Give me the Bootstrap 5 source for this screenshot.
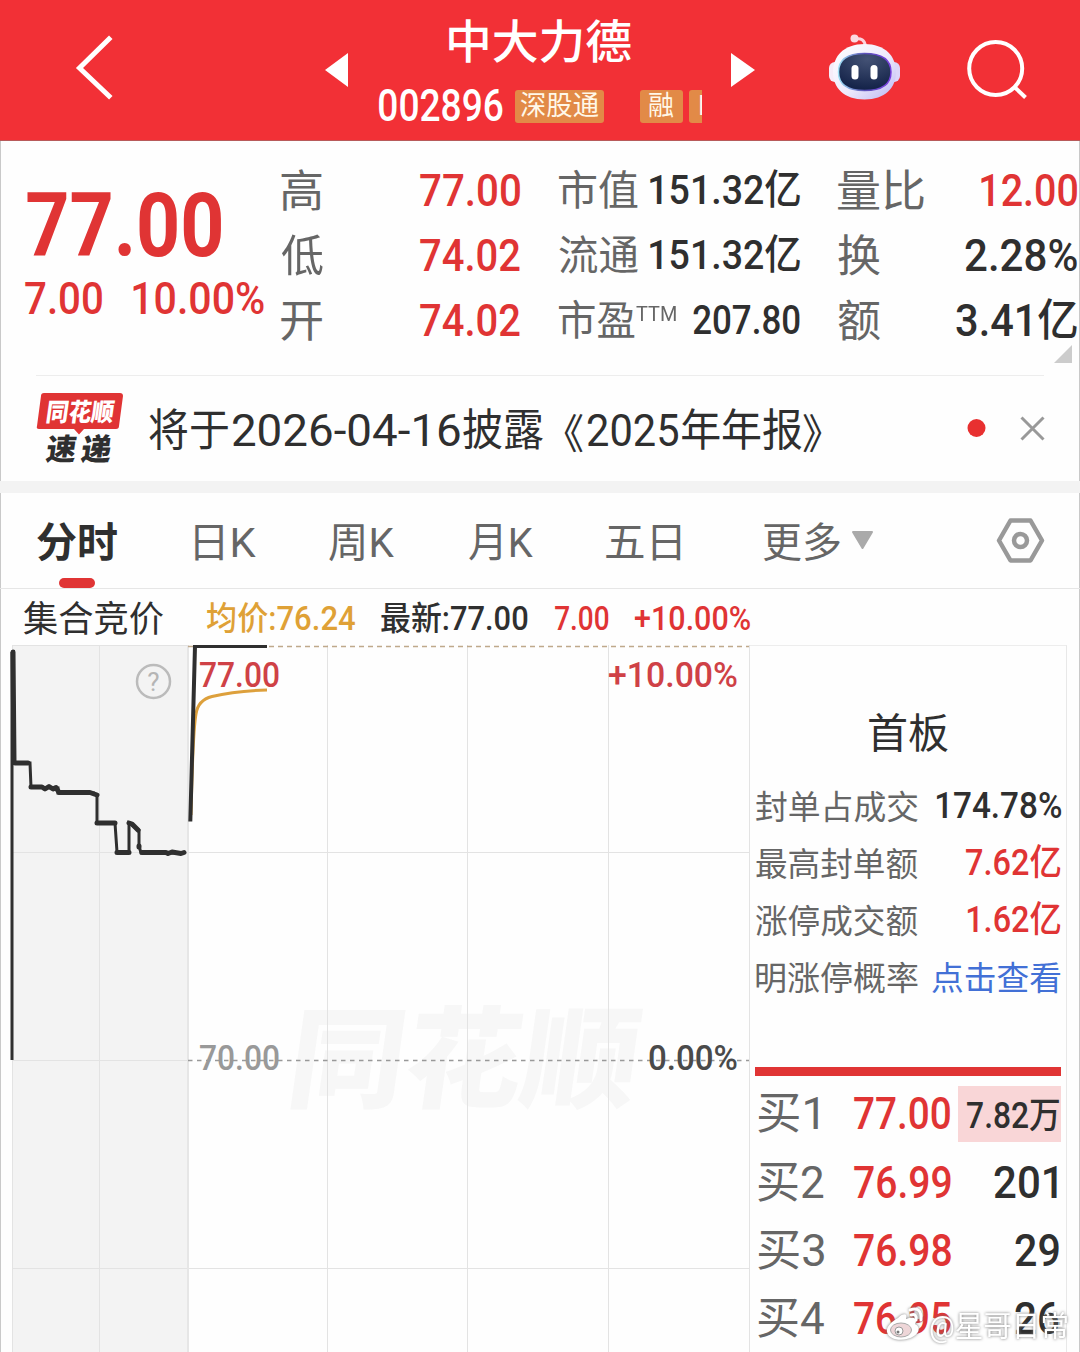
<!DOCTYPE html>
<html lang="zh-CN">
<head>
<meta charset="utf-8">
<meta name="viewport" content="width=device-width, initial-scale=1">
<title>中大力德 002896</title>
<link href="https://cdn.jsdelivr.net/npm/bootstrap@5.3.0/dist/css/bootstrap.min.css" rel="stylesheet">
<style>
  :root { --up:#e03434; --ink:#2f2f2f; --dim:#666; }
  body { font-family:Roboto,"Noto Sans CJK SC",sans-serif; color:var(--ink); background:#fefefe; width:1080px; height:1352px; overflow:hidden; }
  svg { display:block; flex:none; }
  .screen { height:1352px; box-shadow:inset 1px 0 #c9c9c9, inset -1px 0 #c9c9c9; overflow:hidden; }
  .fit { display:block; flex:none; white-space:nowrap; line-height:1; font-weight:inherit; }
  .fit > span { display:inline-block; transform-origin:0 50%; }
  .quo { flex:none; width:41px; font-size:41px; line-height:44px; font-family:"Noto Sans CJK SC",sans-serif; }
  .up { color:var(--up); } .dim { color:var(--dim); } .avg { color:#dfa136; } .go { color:#4270d6; }
  .med { font-weight:500; }
  .s26 { font-size:27px; } .s32 { font-size:33px; } .s35 { font-size:36px; } .s40 { font-size:41px; } .s43 { font-size:44px; } .s46 { font-size:46px; } .s88 { font-size:89px; }

  .topbar { height:140px; background:#f23036; color:#fff; border-bottom:1px solid #b85a5a; box-sizing:content-box; }
  .ident { width:324px; margin-left:31px; margin-right:-1px; padding-top:18px; }
  .ident .title-line { height:48px; margin-left:70px; }
  .ident .code-line { height:34px; margin-top:23px; }
  .tag { height:33px; background:#e28a47; border-radius:3px; color:#fff8e8; overflow:hidden; flex:none; }
  .tag-a { width:89px; margin-left:12px; } .tag-b { width:43px; margin-left:36px; } .tag-c { width:13px; margin-left:6px; padding-left:9px; border-radius:3px 0 0 3px; }

  .quote { height:234px; padding-top:17px; }
  .last { width:255px; margin-left:25px; }
  .last .big { height:99px; padding:35px 0 0 2px; } .last .chg { height:84px; gap:31px; }
  .qcol > div { height:65px; }
  .qcol > div > .dim:first-child { margin-top:2px; }
  .q1 { width:239px; margin-left:1px; } .q2 { width:241px; margin-left:39px; } .q3 { width:239px; margin-left:38px; }
  .rule { height:1px; margin:0 36px; background:#ededed; }
  .corner { margin:-30px 8px 12px auto; }

  .news { height:105px; }
  .band { height:12px; background:#f3f3f3; }
  .tabs { height:96px; border-bottom:1px solid #e6e6e6; padding-left:37px; color:var(--dim); }
  .tabs .fit { margin-top:5px; }
  .tabs .on { color:var(--ink); font-weight:700; position:relative; }
  .tabs .on::after { content:""; position:absolute; left:22px; bottom:-24px; width:36px; height:10px; border-radius:5px; background:var(--up); }
  .legendbar { height:56px; padding:3px 0 0 24px; }
  .side { width:317px; padding:63px 5px 0 6px; margin-right:12px; border-top:1px solid #ededed; border-right:1px solid #e8e8e8; }
  .side .info { height:57px; }
  .side .info .med { margin-top:-3px; }
  .side .head { height:50px; margin-bottom:20px; }
  .bar-red { height:9px; background:var(--up); margin:60px 0 4px -1px; }
  .bid { height:68.4px; padding-left:2px; }
  .bid .hot { width:103px; height:56px; margin-right:0; background:#f9d6d7; padding:3px 2px 0 0; }
  .sig { position:absolute; left:880px; top:1300px; }
</style>
<script src="https://cdn.jsdelivr.net/npm/bootstrap@5.3.0/dist/js/bootstrap.bundle.min.js"></script>
</head>
<body>
<div class="screen position-relative">
  <header class="topbar d-flex">
    <svg width="42" height="140" viewBox="0 0 42 140" style="margin-left:72px"><path d="M37 39 7.500 68 37 96" fill="none" stroke="#fff" stroke-width="5" stroke-linecap="square"/></svg>
    <svg width="234" height="140"><path d="M211 70 234 53V87Z" fill="#fff"/></svg>
    <div class="ident d-flex flex-column">
      <div class="title-line d-flex align-items-center med s46"><b class="fit" data-w="182">中大力德</b></div>
      <div class="code-line d-flex align-items-center">
        <b class="fit med s43" data-w="124">002896</b>
        <div class="tag tag-a d-flex align-items-center justify-content-center s26"><b class="fit" data-w="78">深股通</b></div>
        <div class="tag tag-b d-flex align-items-center justify-content-center s26"><b class="fit" data-w="25">融</b></div>
        <div class="tag tag-c d-flex align-items-center s26">L</div>
      </div>
    </div>
    <svg width="378" height="140" viewBox="702 0 378 140">
      <defs>
        <linearGradient id="shell" x1="0" y1="0" x2="1" y2="1"><stop offset="0" stop-color="#fff"/><stop offset=".55" stop-color="#eeeafc"/><stop offset="1" stop-color="#b9b6f3"/></linearGradient>
        <radialGradient id="visor" cx=".55" cy=".15" r=".8"><stop offset="0" stop-color="#445275"/><stop offset="1" stop-color="#15244a"/></radialGradient>
        <linearGradient id="rim"><stop offset="0" stop-color="#9fe0f5"/><stop offset=".5" stop-color="#5b50b8"/><stop offset="1" stop-color="#7a3fe0"/></linearGradient>
      </defs>
      <path d="M731 53 755 70 731 87Z" fill="#fff"/>
      <path d="M855 39Q864 37 865.500 46" fill="none" stroke="#fbd3dd" stroke-width="3"/><circle cx="854.500" cy="38.500" r="4" fill="#fbd9e2"/>
      <rect x="829" y="62" width="12" height="20" rx="6" fill="#f6ecf8"/><rect x="888" y="62" width="12" height="20" rx="6" fill="#dcd6fa"/>
      <path d="M864.500 44C885 44 896 56 896 72S885 99.500 864.500 99.500 833 88 833 72 844 44 864.500 44Z" fill="url(#shell)"/>
      <path d="M864.500 53.500C884 53.500 891 61 891 72S884 90.500 864.500 90.500 838.500 83 838.500 72 845 53.500 864.500 53.500Z" fill="url(#visor)" stroke="url(#rim)" stroke-width="1.500"/>
      <rect x="851.500" y="65" width="7" height="14.500" rx="3.500" fill="#fff"/><rect x="870.500" y="65" width="7" height="14.500" rx="3.500" fill="#fff"/>
      <circle cx="995.700" cy="68.500" r="26.500" fill="none" stroke="#fff" stroke-width="4"/><path d="M1014.500 87 1025.500 97.500" stroke="#fff" stroke-width="4"/>
    </svg>
  </header>

  <section class="quote d-flex">
    <div class="last up med">
      <div class="big d-flex align-items-center"><b class="fit s88" data-w="194" style="font-weight:700">77.00</b></div>
      <div class="chg d-flex align-items-center s43"><b class="fit" data-w="77">7.00</b><b class="fit" data-w="131">10.00%</b></div>
    </div>
    <div class="qcol q1 s43">
      <div class="d-flex justify-content-between align-items-center"><b class="fit dim" data-w="41">高</b><b class="fit up med" data-w="100">77.00</b></div>
      <div class="d-flex justify-content-between align-items-center"><b class="fit dim" data-w="42">低</b><b class="fit up med" data-w="100">74.02</b></div>
      <div class="d-flex justify-content-between align-items-center"><b class="fit dim" data-w="41">开</b><b class="fit up med" data-w="100">74.02</b></div>
    </div>
    <div class="qcol q2 s40">
      <div class="d-flex justify-content-between align-items-center"><b class="fit dim" data-w="79">市值</b><b class="fit med" data-w="150">151.32亿</b></div>
      <div class="d-flex justify-content-between align-items-center"><b class="fit dim" data-w="79">流通</b><b class="fit med" data-w="150">151.32亿</b></div>
      <div class="d-flex align-items-center"><b class="fit dim" data-w="76">市盈</b><b class="fit dim" data-w="40" style="font-size:21px;margin:0 0 13px 1px">TTM</b><b class="fit med ms-auto" data-w="107">207.80</b></div>
    </div>
    <div class="qcol q3 s43">
      <div class="d-flex justify-content-between align-items-center"><b class="fit dim" data-w="86">量比</b><b class="fit up med" data-w="96">12.00</b></div>
      <div class="d-flex justify-content-between align-items-center"><b class="fit dim" data-w="42">换</b><b class="fit med" data-w="112">2.28%</b></div>
      <div class="d-flex justify-content-between align-items-center"><b class="fit dim" data-w="42">额</b><b class="fit med" data-w="121">3.41亿</b></div>
    </div>
  </section>
  <svg class="corner" width="18" height="18"><path d="M18 0V18H0Z" fill="#ccc"/></svg>
  <div class="rule"></div>

  <section class="news d-flex align-items-center">
    <svg width="149" height="105" viewBox="0 376 149 105">
      <path d="M44 393H120Q123 393 123 396L119 426Q119 429 116 429H84L79 434.500 74 429H39Q36 429 37 426L41 396Q41 393 44 393Z" fill="#e03434"/>
      <text transform="translate(45 421) skewX(-8)" font-size="25" font-weight="900" fill="#fff" textLength="68" lengthAdjust="spacingAndGlyphs">同花顺</text>
      <text transform="translate(45 460) skewX(-8)" font-size="30" font-weight="900" fill="#2f2f2f" textLength="30" lengthAdjust="spacingAndGlyphs">速</text>
      <text transform="translate(80 460) skewX(-8)" font-size="30" font-weight="900" fill="#2f2f2f" textLength="30" lengthAdjust="spacingAndGlyphs">递</text>
    </svg>
    <div class="d-flex s43 pt-1">
      <b class="fit" data-w="79">将于</b>
      <b class="fit" data-w="227" style="margin-left:5px">2026-04-16</b>
      <b class="fit" data-w="80" style="margin-left:3px">披露</b>
      <span class="quo">《</span>
      <b class="fit" data-w="90" style="margin-left:4px">2025</b>
      <b class="fit" data-w="120" style="margin-left:4px">年年报</b>
      <span class="quo">》</span>
    </div>
    <svg class="ms-auto me-4" width="89" height="105" viewBox="967 376 89 105"><circle cx="976.500" cy="428" r="9" fill="#e83030"/><path d="M1021.500 417.500 1043.500 439.500M1043.500 417.500 1021.500 439.500" stroke="#999" stroke-width="3"/></svg>
  </section>
  <div class="band"></div>

  <nav class="tabs d-flex align-items-center s40">
    <div class="on"><b class="fit" data-w="80">分时</b></div>
    <b class="fit" data-w="61" style="margin-left:78px">日K</b>
    <b class="fit" data-w="65" style="margin-left:73px">周K</b>
    <b class="fit" data-w="64" style="margin-left:75px">月K</b>
    <b class="fit" data-w="75" style="margin-left:73px">五日</b>
    <b class="fit" data-w="77" style="margin-left:82px">更多</b>
    <svg class="ms-auto" width="230" height="94" viewBox="850 494 230 94"><path d="M853 532H872L862.500 548Z" fill="#aaa" stroke="#aaa" stroke-width="2" stroke-linejoin="round"/><path d="M1010.500 520.500H1030.500L1042 540.500 1030.500 560.500H1010.500L999 540.500Z" fill="none" stroke="#999" stroke-width="4.500" stroke-linejoin="round"/><circle cx="1020.500" cy="540.500" r="6.500" fill="none" stroke="#999" stroke-width="4.500"/></svg>
  </nav>

  <div class="legendbar d-flex align-items-center">
    <b class="fit s35" data-w="139" style="margin-top:3px">集合竞价</b>
    <b class="fit s32 avg med" data-w="148" style="margin-left:44px">均价:76.24</b>
    <b class="fit s32 med" data-w="147" style="margin-left:26px">最新:77.00</b>
    <b class="fit s32 up med" data-w="54" style="margin-left:27px">7.00</b>
    <b class="fit s32 up med" data-w="115" style="margin-left:26px">+10.00%</b>
  </div>

  <main class="d-flex">
    <svg width="750" height="707" viewBox="0 645 750 707">
      <rect x="12" y="645" width="176" height="707" fill="#f3f3f3"/>
      <text transform="translate(284 1099) skewX(-8)" font-size="110" font-weight="900" fill="#f7f7f7" textLength="350" lengthAdjust="spacingAndGlyphs">同花顺</text>
      <path d="M12.500 645V1352M99.500 645V1352M327.500 645V1352M467.500 645V1352M608.500 645V1352M749.500 645V1352M12 645.500H188M12 852.500H749M12 1060.500H188M12 1268.500H749" stroke="#e3e3e3" fill="none"/>
      <path d="M188 645V1352" stroke="#e6e6e6" stroke-width="2"/>
      <path d="M188 646.500H749" stroke="#bfa98b" stroke-width="1.500" stroke-dasharray="5 4"/>
      <path d="M188 1060.500H749" stroke="#999" stroke-width="1.500" stroke-dasharray="4.500 4.500"/>
      <circle cx="153.500" cy="681.500" r="16.500" fill="none" stroke="#bbb" stroke-width="2.500"/>
      <text x="153.500" y="691" text-anchor="middle" font-size="26" fill="#b5b5b5">?</text>
      <path d="M191 815C192 770 193 730 196 714Q198 700 212 696.500 235 691 267 690" fill="none" stroke="#dda03c" stroke-width="3"/>
      <path d="M12 652V1060" stroke="#2f2f2f" stroke-width="3"/>
      <path d="M14 763 30 763 31 787 58 788V793H94L97 796V823H115L117 852H129V823L139 830V846L141 853H184" fill="none" stroke="#2f2f2f" stroke-width="3"/>
      <path d="M13 652 14 762M15 763H28M31 787H42L45 789 49 786.500 53 789 56 787.500 59 792.500H90L97 795M97 823H115M117 852.500H129M129 823 132 824 138 830M139 846V847M142 852.500H166L168 853.500 172 852 181 853.500 184 852.500" fill="none" stroke="#2f2f2f" stroke-width="5" stroke-linecap="round" stroke-linejoin="round"/>
      <path d="M190.300 821.500 195 646H267" fill="none" stroke="#2f2f2f" stroke-width="4"/>
      <g font-size="35" font-weight="500">
        <text x="199" y="687" fill="#cf4146" textLength="81" lengthAdjust="spacingAndGlyphs">77.00</text>
        <text x="608" y="687" fill="#cf4146" textLength="130" lengthAdjust="spacingAndGlyphs">+10.00%</text>
        <text x="199" y="1069.500" fill="#999" textLength="81" lengthAdjust="spacingAndGlyphs">70.00</text>
        <text x="648" y="1069.500" fill="#4a4a4a" textLength="90" lengthAdjust="spacingAndGlyphs">0.00%</text>
      </g>
    </svg>
    <aside class="side">
      <div class="head d-flex align-items-center justify-content-center s40"><b class="fit" data-w="79">首板</b></div>
      <div class="info d-flex align-items-center justify-content-between s32"><b class="fit dim" data-w="162">封单占成交</b><b class="fit s35 med" data-w="125">174.78%</b></div>
      <div class="info d-flex align-items-center justify-content-between s32"><b class="fit dim" data-w="162">最高封单额</b><b class="fit s35 up med" data-w="95">7.62亿</b></div>
      <div class="info d-flex align-items-center justify-content-between s32"><b class="fit dim" data-w="162">涨停成交额</b><b class="fit s35 up med" data-w="94">1.62亿</b></div>
      <div class="info d-flex align-items-center justify-content-between s32"><b class="fit dim" data-w="162">明涨停概率</b><b class="fit go" data-w="129">点击查看</b></div>
      <div class="bar-red"></div>
      <div class="bid d-flex align-items-center s43"><b class="fit dim" data-w="60">买1</b><b class="fit up med" data-w="96" style="margin-left:36px">77.00</b><div class="hot ms-auto d-flex align-items-center justify-content-end"><b class="fit med s35" data-w="92">7.82万</b></div></div>
      <div class="bid d-flex align-items-center s43"><b class="fit dim" data-w="66">买2</b><b class="fit up med" data-w="97" style="margin-left:30px">76.99</b><b class="fit med ms-auto me-1" data-w="63">201</b></div>
      <div class="bid d-flex align-items-center s43"><b class="fit dim" data-w="66">买3</b><b class="fit up med" data-w="97" style="margin-left:30px">76.98</b><b class="fit med ms-auto" data-w="44" style="margin-right:2px">29</b></div>
      <div class="bid d-flex align-items-center s43"><b class="fit dim" data-w="66">买4</b><b class="fit up med" data-w="97" style="margin-left:30px">76.95</b><b class="fit med ms-auto" data-w="44" style="margin-right:2px">26</b></div>
    </aside>
  </main>

  <svg class="sig" width="200" height="52" viewBox="880 1300 200 52" style="filter:drop-shadow(0 0 1.500px #777)">
    <path d="M898 1318C904 1312 908 1314 906 1319 914 1316 918 1319 915 1324 921 1327 919 1333 914 1336 905 1342 889 1341 887 1332 886 1327 891 1322 898 1318Z" fill="#fff"/>
    <ellipse cx="901" cy="1330" rx="10.500" ry="7" fill="#eed6d8" stroke="#aaa"/><circle cx="899" cy="1331" r="4" fill="#fff" stroke="#999"/><circle cx="898" cy="1332" r="1.500" fill="#777"/>
    <path d="M910 1310Q922 1306 921 1320M911 1315Q917 1313 916 1320" fill="none" stroke="#fff" stroke-width="3" stroke-linecap="round"/>
    <text x="929" y="1337" font-size="29" fill="#fff" textLength="140" lengthAdjust="spacingAndGlyphs">@星哥日常</text>
  </svg>
</div>
<script>
  // Fits the ink of every figure and label to its column width.
  const pen = document.createElement('canvas').getContext('2d');
  document.querySelectorAll('.fit').forEach(el => {
    const cs = getComputedStyle(el), w = +el.dataset.w, span = document.createElement('span');
    pen.font = `${cs.fontWeight} ${cs.fontSize} ${cs.fontFamily}`;
    const m = pen.measureText(el.textContent), left = m.actualBoundingBoxLeft, ink = left + m.actualBoundingBoxRight;
    span.textContent = el.textContent;
    el.textContent = '';
    el.append(span);
    el.style.width = w + 'px';
    span.style.transform = `scaleX(${w / ink}) translateX(${left}px)`;
  });
</script>
</body>
</html>
